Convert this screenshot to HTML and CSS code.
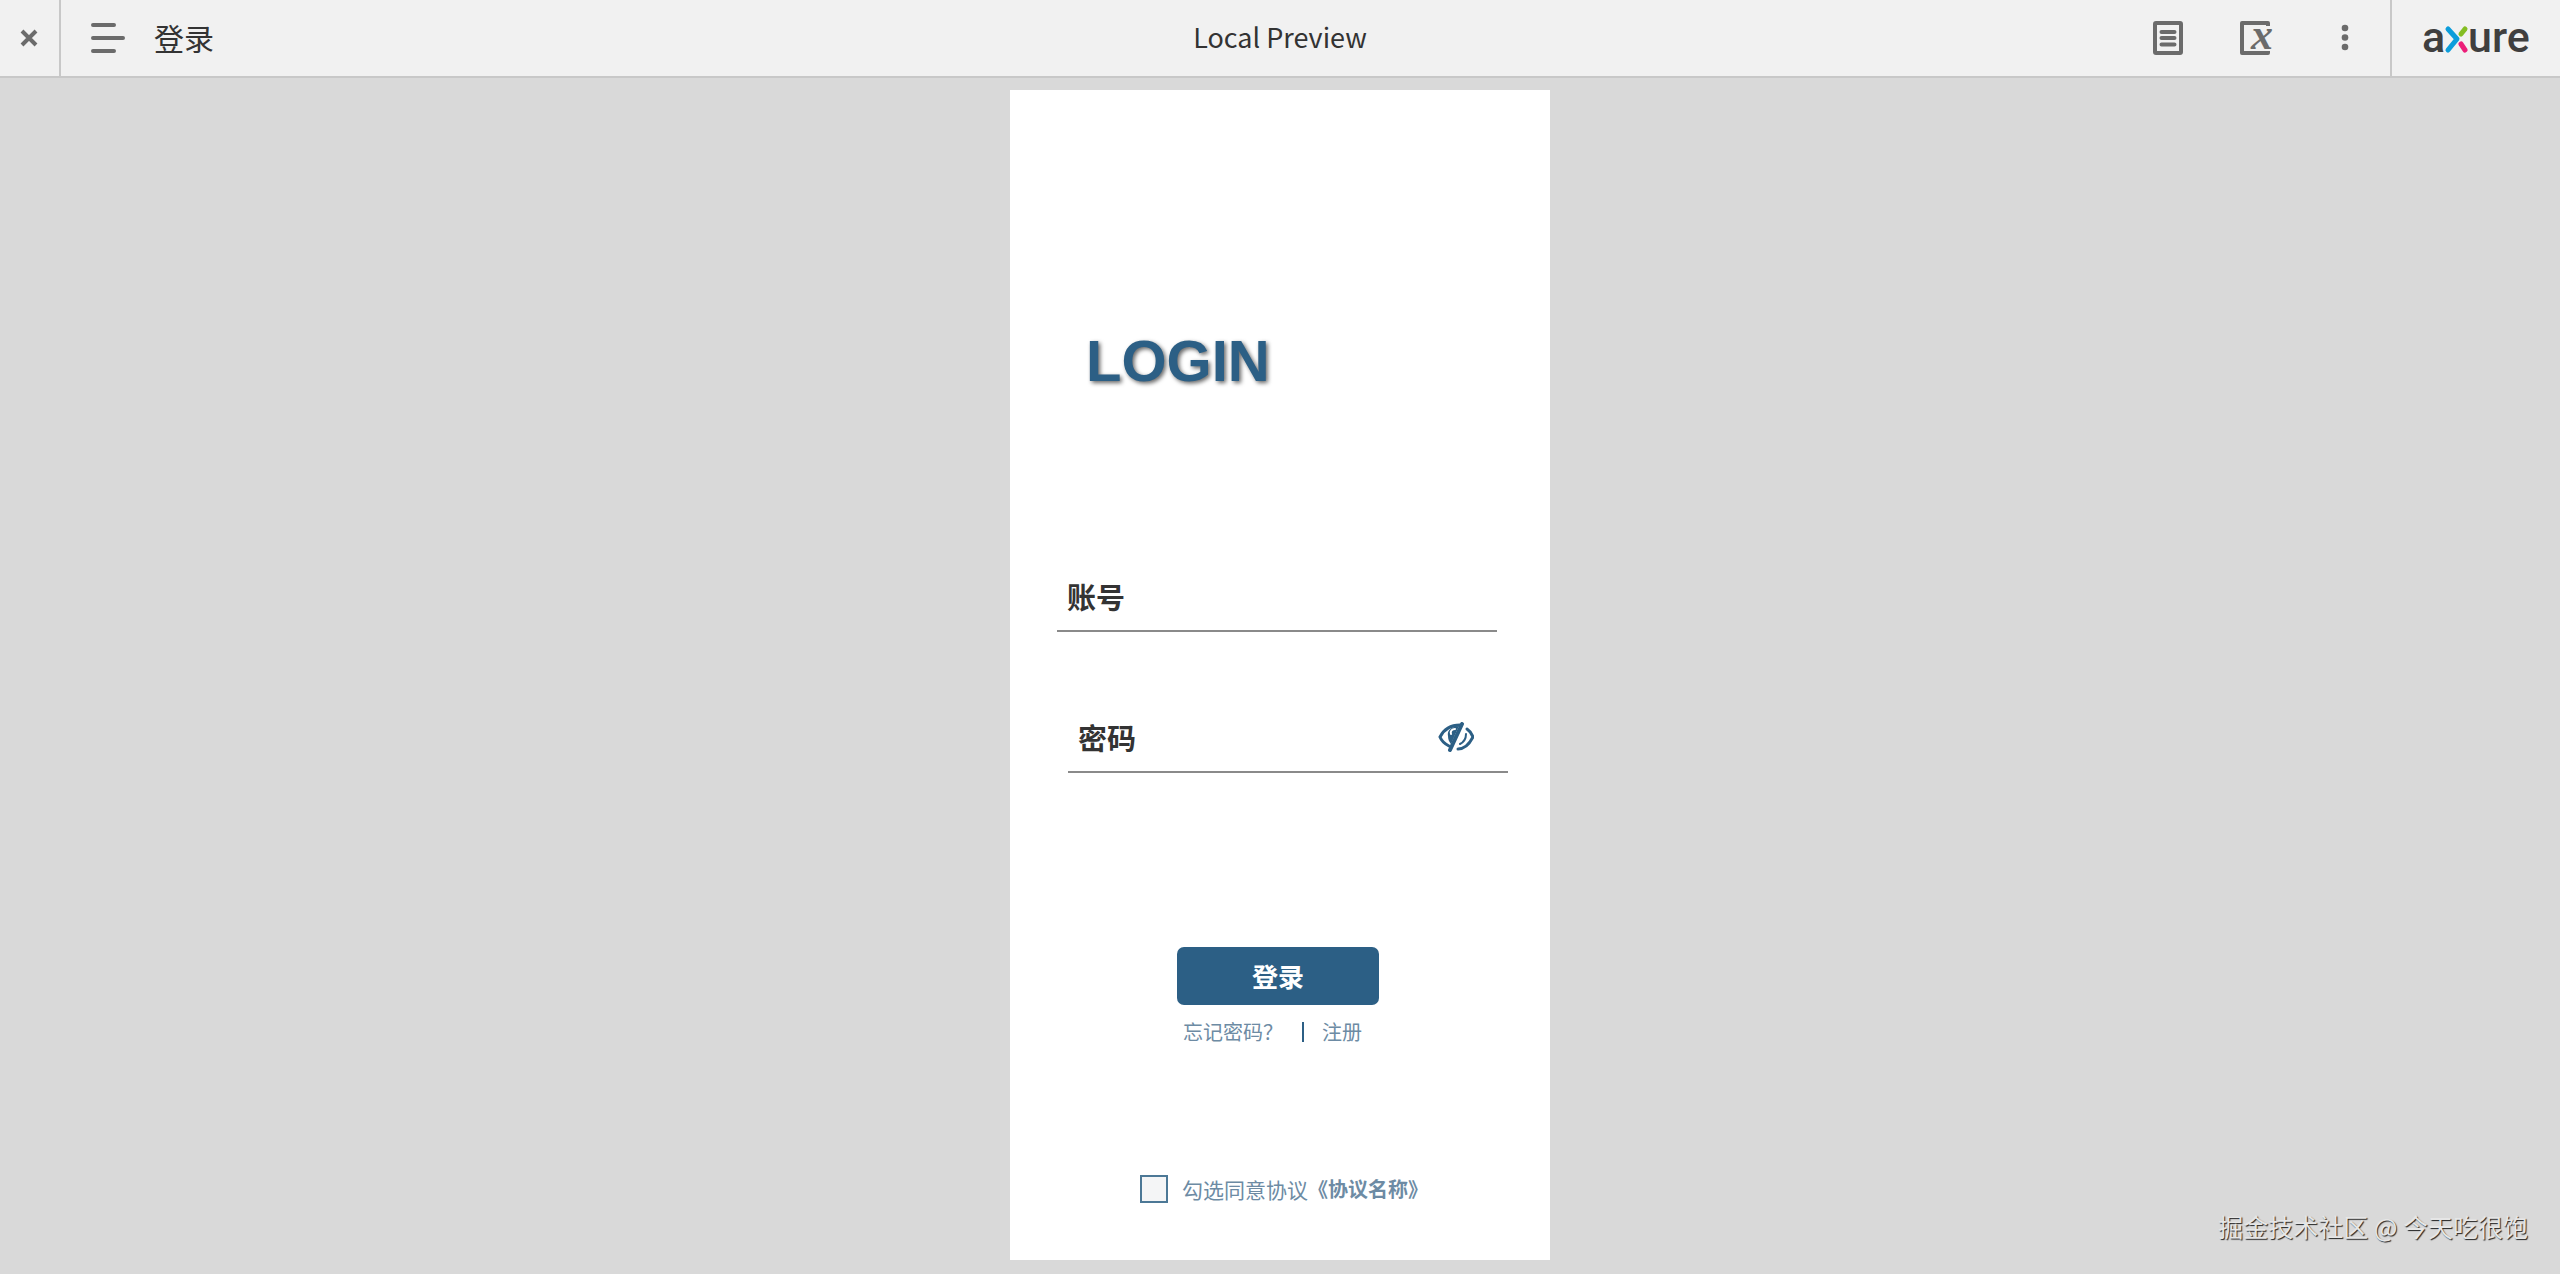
FILE: index.html
```html
<!DOCTYPE html>
<html lang="zh-CN">
<head>
    <meta charset="UTF-8">
    <meta name="viewport" content="width=device-width, initial-scale=1.0">
    <title>登录</title>
    <link rel="stylesheet" href="styles.css">
</head>
<body>
    <header class="topbar">
        <div class="topbar-left">
            <button type="button" class="icon-btn close-btn" aria-label="Close">
                <svg width="18" height="18" viewBox="0 0 18 18">
                    <path d="M2 2L16 16M16 2L2 16" stroke="#6b6b6b" stroke-width="4"/>
                </svg>
            </button>
            <button type="button" class="icon-btn menu-btn" aria-label="Menu">
                <svg width="34" height="30" viewBox="0 0 34 30">
                    <path d="M2 2H23M2 15H32M2 28H23" stroke="#6b6b6b" stroke-width="4" stroke-linecap="round"/>
                </svg>
            </button>
            <span class="page-name">登录</span>
        </div>
        <div class="project-name">Local Preview</div>
        <div class="topbar-right">
            <div class="tools">
                <button type="button" class="icon-btn" aria-label="Notes">
                    <svg width="30" height="34" viewBox="0 0 30 34">
                        <rect x="2" y="2" width="26" height="30" rx="1" fill="none" stroke="#6b6b6b" stroke-width="4"/>
                        <path d="M8.500 11H21.500M8.500 17H21.500M8.500 23.500H21.500" stroke="#6b6b6b" stroke-width="4" stroke-linecap="round"/>
                    </svg>
                </button>
                <button type="button" class="icon-btn" aria-label="Variables">
                    <svg width="34" height="60" viewBox="0 0 34 60">
                        <path d="M28 18V15H2V45H28V43" fill="none" stroke="#6b6b6b" stroke-width="4" stroke-linejoin="round"/>
                        <text class="var-x" x="11" y="41">x</text>
                    </svg>
                </button>
                <button type="button" class="icon-btn" aria-label="More">
                    <svg width="8" height="28" viewBox="0 0 8 28">
                        <g fill="#6b6b6b">
                            <circle cx="4" cy="4" r="3.300"/>
                            <circle cx="4" cy="13.500" r="3.300"/>
                            <circle cx="4" cy="23" r="3.300"/>
                        </g>
                    </svg>
                </button>
            </div>
            <a href="#" class="brand" aria-label="axure">
                <svg width="110" height="64" viewBox="0 0 110 64">
                    <text class="brand-text" x="0" y="46">a</text>
                    <g fill="none" stroke-width="5" stroke-linecap="round" stroke-linejoin="round">
                        <path d="M26 23L35 33L26 44" stroke="#0c9ddb"/>
                        <path d="M43 23L39 28" stroke="#84bd22"/>
                        <path d="M39 38L43 44" stroke="#ec1e79"/>
                    </g>
                    <text class="brand-text" x="46" y="46">ure</text>
                </svg>
            </a>
        </div>
    </header>

    <main class="stage">
        <form class="phone">
            <h1>LOGIN</h1>

            <div class="field">
                <label for="account">账号</label>
                <input type="text" id="account">
            </div>

            <div class="field field-password">
                <label for="password">密码</label>
                <input type="password" id="password">
                <button type="button" class="icon-btn" aria-label="显示密码">
                    <svg width="36" height="30" viewBox="0 0 36 30">
                        <g fill="none" stroke="#2c5f85" stroke-width="3" stroke-linecap="round">
                            <path d="M24 2L12 28" stroke-width="4"/>
                            <path d="M22 3C13 3 6 7 2 15C4 20 7 22 11 24"/>
                            <path d="M29 7C32 9 34 12 35 15C31 23 27 27 20 27"/>
                            <path d="M28 12C28 17 26 20 22 22" stroke-width="2"/>
                        </g>
                        <path d="M21 4C12 5 9 9 10 14C10 17 11 20 13 22Z" fill="#2c5f85"/>
                        <path d="M13 12C12 9 14 7 17 7" fill="none" stroke="#fff" stroke-width="2" stroke-linecap="round"/>
                    </svg>
                </button>
            </div>

            <div class="actions">
                <button type="submit" class="login-btn">登录</button>
                <div class="links">
                    <a href="#">忘记密码？</a>
                    <span class="divider"></span>
                    <a href="#">注册</a>
                </div>
            </div>

            <div class="agreement">
                <input type="checkbox" id="agree">
                <label for="agree">勾选同意协议</label>
                <a href="#">《协议名称》</a>
            </div>
        </form>
    </main>

    <div class="watermark">掘金技术社区 @ 今天吃很饱</div>
</body>
</html>
```
FILE: styles.css
```css
* {
    box-sizing: border-box;
}

body {
    margin: 0;
    min-height: 100vh;
    background: #d9d9d9;
    color: #333;
    font-family: "Noto Sans CJK SC", sans-serif;
}

a {
    color: inherit;
    text-decoration: none;
}

.icon-btn {
    display: flex;
    align-items: center;
    justify-content: center;
    padding: 0;
    border: none;
    background: none;
    cursor: pointer;
}

/* top bar */
.topbar {
    display: flex;
    height: 78px;
    background: #f1f1f1;
    border-bottom: 2px solid #c8c8c8;
}

.topbar-left,
.topbar-right {
    flex: 1;
    display: flex;
    align-items: center;
}

.topbar-right {
    justify-content: flex-end;
}

.close-btn {
    width: 61px;
    height: 100%;
    padding-right: 2px;
    border-right: 2px solid #c8c8c8;
}

.menu-btn {
    margin: 0 29px 0 30px;
}

.page-name {
    padding-bottom: 2px;
    font-size: 30px;
    line-height: 44px;
}

.project-name {
    font-size: 27px;
    line-height: 74px;
}

.tools {
    display: flex;
    align-items: center;
    gap: 57px;
    padding-right: 41px;
}

.tools .icon-btn:last-child {
    margin-left: 10px;
}

.var-x {
    font: italic bold 44px "Liberation Serif", serif;
    fill: #6b6b6b;
}

.brand {
    display: flex;
    align-items: center;
    height: 100%;
    padding: 0 28px 0 30px;
    border-left: 2px solid #c8c8c8;
}

.brand-text {
    font: 500 43px Roboto, sans-serif;
    fill: #3f3f3f;
}

/* login page */
.stage {
    padding: 12px 0;
}

.phone {
    display: flex;
    flex-direction: column;
    max-width: 540px;
    margin: 0 auto;
    padding: 238px 4px 57px 0;
    background: #fff;
}

h1 {
    margin: 0 0 170px 76px;
    color: #2c5f85;
    font: bold 58px/66px "Liberation Sans", Arial, sans-serif;
    text-shadow: 2px 2px 4px rgba(0, 0, 0, 0.6);
}

.field {
    display: flex;
    align-items: center;
    height: 68px;
    margin: 0 49px 0 47px;
    padding: 0 34px 2px 10px;
    border-bottom: 2px solid #8a8a8a;
}

.field-password {
    margin: 73px 38px 174px 58px;
}

.field label {
    font-size: 29px;
    font-weight: bold;
}

.field input {
    flex: 1;
    min-width: 0;
    height: 44px;
    padding: 0 12px;
    border: none;
    outline: none;
    background: none;
    font-size: 24px;
}

.actions {
    width: 202px;
    margin: 0 auto;
}

.login-btn {
    width: 100%;
    height: 58px;
    padding: 0 0 2px;
    border: none;
    border-radius: 7px;
    background: #2c5f85;
    color: #fff;
    font-family: inherit;
    font-size: 26px;
    font-weight: bold;
    cursor: pointer;
}

.links {
    display: flex;
    align-items: center;
    margin: 13px 0 129px;
    padding-left: 6px;
    color: #6d8ba4;
    font-size: 20px;
    line-height: 28px;
}

.divider {
    width: 2px;
    height: 20px;
    margin: 0 18px 0 19px;
    background: #2c5f85;
}

.agreement {
    display: flex;
    align-items: center;
    justify-content: center;
    padding-left: 12px;
    color: #6d8ba4;
    font-size: 21px;
    line-height: 28px;
}

.agreement input {
    appearance: none;
    width: 28px;
    height: 28px;
    margin: 0 14px 0 0;
    border: 2px solid #4c7896;
    background: #f4f5f6;
}

.agreement input:checked {
    background: #2c5f85;
}

.agreement a {
    font-size: 20px;
    font-weight: bold;
}

.watermark {
    position: absolute;
    right: 32px;
    bottom: 30px;
    color: #e6e6e6;
    font-size: 25px;
    line-height: 36px;
    text-shadow: 1px 1px 1px #222;
}
```
